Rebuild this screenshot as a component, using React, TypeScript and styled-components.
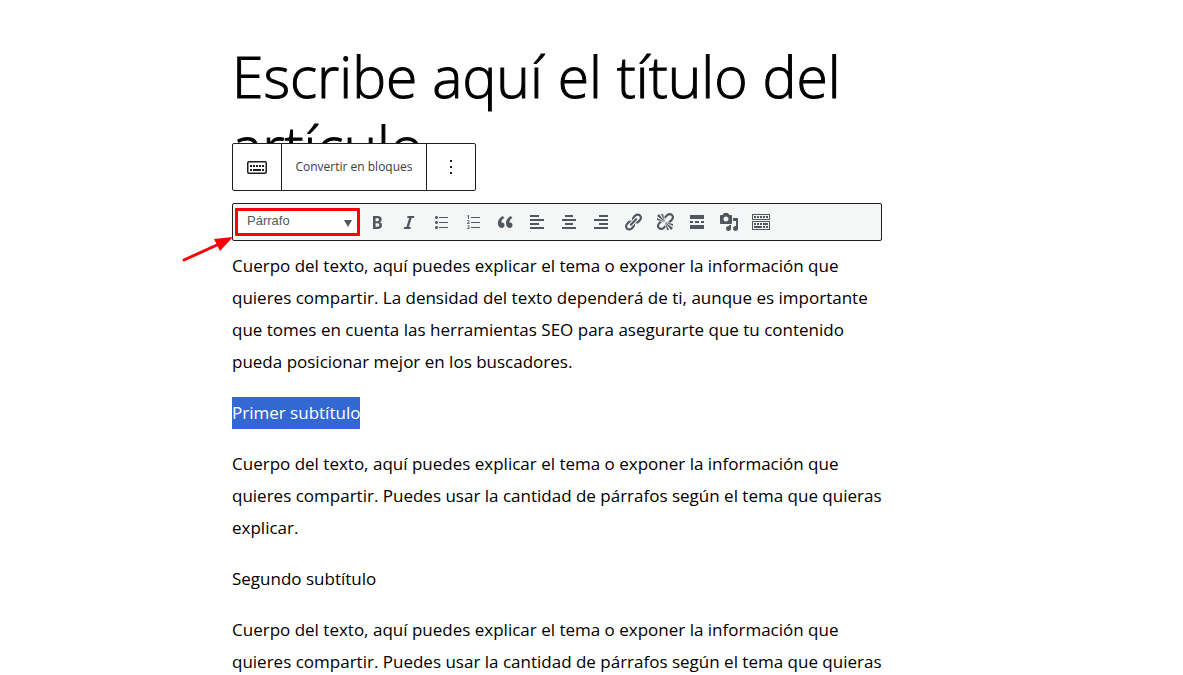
import React from "react";
import styled, { createGlobalStyle } from "styled-components";

const GlobalStyle = createGlobalStyle`
  *, *::before, *::after { box-sizing: border-box; }
  html, body { margin: 0; background: #fff; }
  body {
    height: 100vh;
    overflow: hidden;
    color: #000;
    font-family: "Open Sans", "Noto Sans", sans-serif;
  }
`;

const Canvas = styled.main`
  display: flex;
  justify-content: center;
  padding: 41px 69px 0 0;
`;

const Column = styled.article`
  width: 100%;
  max-width: 650px;
`;

const Title = styled.h1`
  margin: 0;
  font-size: 57px;
  line-height: 70px;
  font-weight: 300;
  -webkit-text-stroke: 1px #000;
`;

const ClassicBlock = styled.section`
  position: relative;
  margin-top: 22px;
`;

const BlockToolbar = styled.div`
  position: absolute;
  left: 0;
  bottom: calc(100% + 12px);
  display: flex;
  height: 48px;
  background: #fff;
  border: 1px solid #1e1e1e;
  border-radius: 2px;
`;

const BlockButton = styled.button<{ $text?: boolean }>`
  display: flex;
  align-items: center;
  justify-content: center;
  box-sizing: content-box;
  min-width: ${(p) => (p.$text ? "120px" : "48px")};
  padding: ${(p) => (p.$text ? "0 12px" : "0")};
  border: 0;
  background: transparent;
  color: ${(p) => (p.$text ? "#3c3c3c" : "#1e1e1e")};
  font: 400 12px/16px "Open Sans", "Noto Sans", sans-serif;
  white-space: nowrap;

  & + & { border-left: 1px solid #1e1e1e; }
`;

const FormatBar = styled.div`
  display: flex;
  align-items: center;
  height: 38px;
  padding: 0 5px;
  background: #f5f7f7;
  border: 1px solid #1e1e1e;
  border-radius: 2px;
`;

const SelectWrap = styled.div`
  position: relative;
  width: 119px;
  height: 22px;
  margin-right: 4px;
  background: #fff;
`;

const FormatSelect = styled.select`
  display: block;
  appearance: none;
  width: 100%;
  height: 100%;
  padding: 0 20px 2px 9px;
  border: 0;
  background: transparent;
  color: #50575e;
  font: 13px/16px "Liberation Sans", Arial, sans-serif;
`;

const Caret = styled.span`
  position: absolute;
  right: 5px;
  top: 9px;
  border: 4px solid transparent;
  border-top: 7px solid #50575e;
  border-bottom: 0;
  pointer-events: none;
`;

const Highlight = styled.span`
  position: absolute;
  inset: -3px;
  border: 3px solid #fb0007;
  border-radius: 1px;
  pointer-events: none;
`;

const Pointer = styled.svg`
  position: absolute;
  right: calc(100% + 3px);
  top: 100%;
  pointer-events: none;
`;

const IconButton = styled.button`
  display: flex;
  align-items: center;
  justify-content: center;
  flex: none;
  width: 32px;
  height: 30px;
  padding: 0;
  border: 0;
  background: transparent;
  color: #50575e;
`;

const Content = styled.div`
  padding-top: 9px;
`;

const Paragraph = styled.p`
  margin: 0 0 19px;
  font-size: 17px;
  line-height: 32px;
`;

const Selected = styled.mark`
  display: inline-block;
  background: #3367d1;
  color: #fff;
`;

const formatIcons: { label: string; d: string }[] = [
  { label: "Negrita", d: "M6 4v13h4.54c1.37 0 2.46-.33 3.26-1 .8-.66 1.2-1.58 1.2-2.77 0-.84-.17-1.51-.51-2.01s-.9-.85-1.67-1.03v-.09c.57-.1 1.02-.4 1.36-.9s.51-1.13.51-1.91c0-1.14-.39-1.98-1.17-2.5C12.75 4.26 11.5 4 9.78 4H6zm2.57 5.15V6.26h1.36c.73 0 1.27.11 1.61.32.34.22.51.58.51 1.07 0 .54-.16.92-.47 1.15s-.82.35-1.51.35h-1.5zm0 2.19h1.6c1.44 0 2.16.53 2.16 1.61 0 .6-.17 1.05-.51 1.34s-.86.43-1.57.43H8.57v-3.38z" },
  { label: "Cursiva", d: "M14.78 6h-2.13l-2.8 9h2.12l-.62 2H4.6l.62-2h2.14l2.8-9H8.03l.62-2h6.75z" },
  { label: "Lista con viñetas", d: "M5.5 7C4.67 7 4 6.33 4 5.5 4 4.68 4.67 4 5.5 4 6.32 4 7 4.68 7 5.5 7 6.33 6.32 7 5.5 7zM8 5h9v1H8V5zm-2.5 7c-.83 0-1.5-.67-1.5-1.5C4 9.68 4.67 9 5.5 9c.82 0 1.5.68 1.5 1.5 0 .83-.68 1.5-1.5 1.5zM8 10h9v1H8v-1zm-2.5 7c-.83 0-1.5-.67-1.5-1.5 0-.82.67-1.5 1.5-1.5.82 0 1.5.68 1.5 1.5 0 .83-.68 1.5-1.5 1.5zM8 15h9v1H8v-1z" },
  { label: "Lista numerada", d: "M6 7V3h-.69L4.02 4.03l.4.51.46-.37c.06-.05.16-.14.3-.28l-.02.42V7H6zM8 5h9v1H8V5zM8 10h9v1H8v-1zM8 15h9v1H8v-1zM4 12v-.6l1.1-1.1c.6-.6.7-.8.7-1 0-.3-.2-.4-.5-.4s-.6.2-.9.4l-.4-.5c.4-.4.8-.6 1.4-.6.7 0 1.2.4 1.2 1 0 .5-.2.9-.8 1.4l-.7.7h1.6v.7H4zM5.9 14.9c.5.1.8.4.8.9 0 .8-.6 1.2-1.6 1.2-.4 0-.8-.1-1.1-.2v-.7c.3.1.6.2 1 .2.5 0 .8-.2.8-.5 0-.4-.3-.5-.9-.5h-.3v-.6h.3c.5 0 .8-.2.8-.5s-.2-.4-.5-.4-.5.1-.8.3l-.4-.5c.4-.3.8-.4 1.3-.4.7 0 1.2.4 1.2.9 0 .4-.2.7-.6.8z" },
  { label: "Cita", d: "M9.49 13.22c0-.74-.2-1.38-.61-1.9-.62-.78-1.83-.88-2.53-.72-.29-1.65 1.11-3.75 2.92-4.65L7.88 4c-2.73 1.3-5.42 4.28-4.96 8.05C3.21 14.43 4.59 16 6.54 16c.85 0 1.56-.25 2.12-.75s.83-1.18.83-2.03zm8.05 0c0-.74-.2-1.38-.61-1.9-.63-.78-1.83-.88-2.53-.72-.29-1.65 1.11-3.75 2.92-4.65L15.93 4c-2.73 1.3-5.41 4.28-4.95 8.05.29 2.38 1.66 3.95 3.61 3.95.85 0 1.56-.25 2.12-.75s.83-1.18.83-2.03z" },
  { label: "Alinear a la izquierda", d: "M12 5V3H3v2h9zm5 4V7H3v2h14zm-5 4v-2H3v2h9zm5 4v-2H3v2h14z" },
  { label: "Centrar", d: "M14 5V3H6v2h8zm3 4V7H3v2h14zm-3 4v-2H6v2h8zm3 4v-2H3v2h14z" },
  { label: "Alinear a la derecha", d: "M17 5V3H8v2h9zm0 4V7H3v2h14zm0 4v-2H8v2h9zm0 4v-2H3v2h14z" },
  { label: "Insertar enlace", d: "M17.74 2.76c1.68 1.69 1.68 4.41 0 6.1l-1.53 1.52c-1.12 1.12-2.7 1.47-4.14 1.09l2.62-2.61.76-.77.76-.76c.84-.84.84-2.2 0-3.04-.84-.85-2.2-.85-3.04 0l-.77.76-3.38 3.38c-.37-1.44-.02-3.02 1.1-4.14l1.52-1.53c1.69-1.68 4.42-1.68 6.1 0zM8.59 13.43l5.34-5.34c.42-.42.42-1.1 0-1.52-.44-.43-1.13-.39-1.53 0l-5.33 5.34c-.42.42-.42 1.1 0 1.52.44.43 1.13.39 1.52 0zm-.76 2.29l4.14-4.15c.38 1.44.03 3.02-1.09 4.14l-1.52 1.53c-1.69 1.68-4.41 1.68-6.1 0-1.68-1.68-1.68-4.42 0-6.1l1.53-1.52c1.12-1.12 2.7-1.47 4.14-1.1l-4.14 4.15c-.85.84-.85 2.2 0 3.05.84.84 2.2.84 3.04 0z" },
  { label: "Quitar enlace", d: "M17.74 2.26c1.68 1.69 1.68 4.41 0 6.1l-1.53 1.52c-.32.33-.69.58-1.08.77L13 10l1.69-1.64.76-.77.76-.76c.84-.84.84-2.2 0-3.04-.84-.85-2.2-.85-3.04 0l-.77.76-.76.76L10 7l-.65-2.14c.19-.38.44-.75.77-1.07l1.52-1.53c1.69-1.68 4.42-1.68 6.1 0zM2 4l8 6-6-8zm4-2l4 8-2-8H6zM2 6l8 4-8-2V6zm7.36 7.69L10 13l.74 2.35-1.38 1.39c-1.69 1.68-4.41 1.68-6.1 0-1.68-1.68-1.68-4.42 0-6.1l1.39-1.38L7 10l-.69.64-1.52 1.53c-.85.84-.85 2.2 0 3.04.84.85 2.2.85 3.04 0zM18 16l-8-6 6 8zm-4 2l-4-8 2 8h2zm4-4l-8-4 8 2v2z" },
  { label: "Leer más", d: "M17 7V3H3v4h14zM6 11V9H3v2h3zm6 0V9H8v2h4zm5 0V9h-3v2h3zm0 6v-4H3v4h14z" },
  { label: "Añadir medios", d: "M13 11V4c0-.55-.45-1-1-1h-1.67L9 1H5L3.67 3H2c-.55 0-1 .45-1 1v7c0 .55.45 1 1 1h10c.55 0 1-.45 1-1zM7 4.5c1.38 0 2.5 1.12 2.5 2.5S8.38 9.5 7 9.5 4.5 8.38 4.5 7 5.62 4.5 7 4.5zM14 6h5v10.5c0 1.38-1.12 2.5-2.5 2.5S14 17.88 14 16.5s1.12-2.5 2.5-2.5c.17 0 .34.02.5.05V9h-3V6zm-4 8.05V13h2v3.5c0 1.38-1.12 2.5-2.5 2.5S7 17.88 7 16.5 8.12 14 9.5 14c.17 0 .34.02.5.05z" },
  { label: "Alternar la barra de herramientas", d: "M19 2v6H1V2h18zm-1 5V3H2v4h16zM5 4v2H3V4h2zm3 0v2H6V4h2zm3 0v2H9V4h2zm3 0v2h-2V4h2zm3 0v2h-2V4h2zm2 5v9H1V9h18zm-1 8v-7H2v7h16zM5 11v2H3v-2h2zm3 0v2H6v-2h2zm3 0v2H9v-2h2zm6 0v2h-5v-2h5zm-6 3v2H3v-2h8zm3 0v2h-2v-2h2zm3 0v2h-2v-2h2z" },
];

const keyboardPath =
  "M20 6H4c-1.1 0-2 .9-2 2v9c0 1.1.9 2 2 2h16c1.1 0 2-.9 2-2V8c0-1.1-.9-2-2-2zm.5 11c0 .3-.2.5-.5.5H4c-.3 0-.5-.2-.5-.5V8c0-.3.2-.5.5-.5h16c.3 0 .5.2.5.5v9zM10 10H8v2h2v-2zm-5 2h2v-2H5v2zm8-2h-2v2h2v-2zm-5 6h8v-2H8v2zm6-4h2v-2h-2v2zm3 0h2v-2h-2v2zm0 4h2v-2h-2v2zM5 16h2v-2H5v2z";
const morePath = "M13 19h-2v-2h2v2zm0-6h-2v-2h2v2zm0-6h-2V5h2v2z";

function Icon({ d, size }: { d: string; size: number }) {
  return (
    <svg width={size} height={size} viewBox={`0 0 ${size} ${size}`} fill="currentColor" aria-hidden="true">
      <path d={d} />
    </svg>
  );
}

export default function App() {
  return (
    <>
      <GlobalStyle />
      <Canvas>
        <Column>
          <Title>Escribe aquí el título del artículo</Title>
          <ClassicBlock>
            <BlockToolbar role="toolbar" aria-label="Herramientas de bloque">
              <BlockButton type="button" aria-label="Clásico">
                <Icon d={keyboardPath} size={24} />
              </BlockButton>
              <BlockButton type="button" $text>
                Convertir en bloques
              </BlockButton>
              <BlockButton type="button" aria-label="Opciones">
                <Icon d={morePath} size={24} />
              </BlockButton>
            </BlockToolbar>
            <FormatBar role="toolbar" aria-label="Formato">
              <SelectWrap>
                <FormatSelect aria-label="Estilo de párrafo" defaultValue="p">
                  <option value="p">Párrafo</option>
                </FormatSelect>
                <Caret />
                <Highlight />
                <Pointer width="54" height="31" viewBox="0 0 54 31" aria-hidden="true">
                  <path d="M3 27 L36 12" stroke="#fb0007" strokeWidth="3" strokeLinecap="round" />
                  <path d="M52 4 L33 6 L39 18 Z" fill="#fb0007" />
                </Pointer>
              </SelectWrap>
              {formatIcons.map((icon) => (
                <IconButton key={icon.label} type="button" aria-label={icon.label}>
                  <Icon d={icon.d} size={20} />
                </IconButton>
              ))}
            </FormatBar>
            <Content>
              <Paragraph>
                Cuerpo del texto, aquí puedes explicar el tema o exponer la información que quieres
                compartir. La densidad del texto dependerá de ti, aunque es importante que tomes en
                cuenta las herramientas SEO para asegurarte que tu contenido pueda posicionar mejor en
                los buscadores.
              </Paragraph>
              <Paragraph>
                <Selected>Primer subtítulo</Selected>
              </Paragraph>
              <Paragraph>
                Cuerpo del texto, aquí puedes explicar el tema o exponer la información que quieres
                compartir. Puedes usar la cantidad de párrafos según el tema que quieras explicar.
              </Paragraph>
              <Paragraph>Segundo subtítulo</Paragraph>
              <Paragraph>
                Cuerpo del texto, aquí puedes explicar el tema o exponer la información que quieres
                compartir. Puedes usar la cantidad de párrafos según el tema que quieras explicar.
              </Paragraph>
            </Content>
          </ClassicBlock>
        </Column>
      </Canvas>
    </>
  );
}
